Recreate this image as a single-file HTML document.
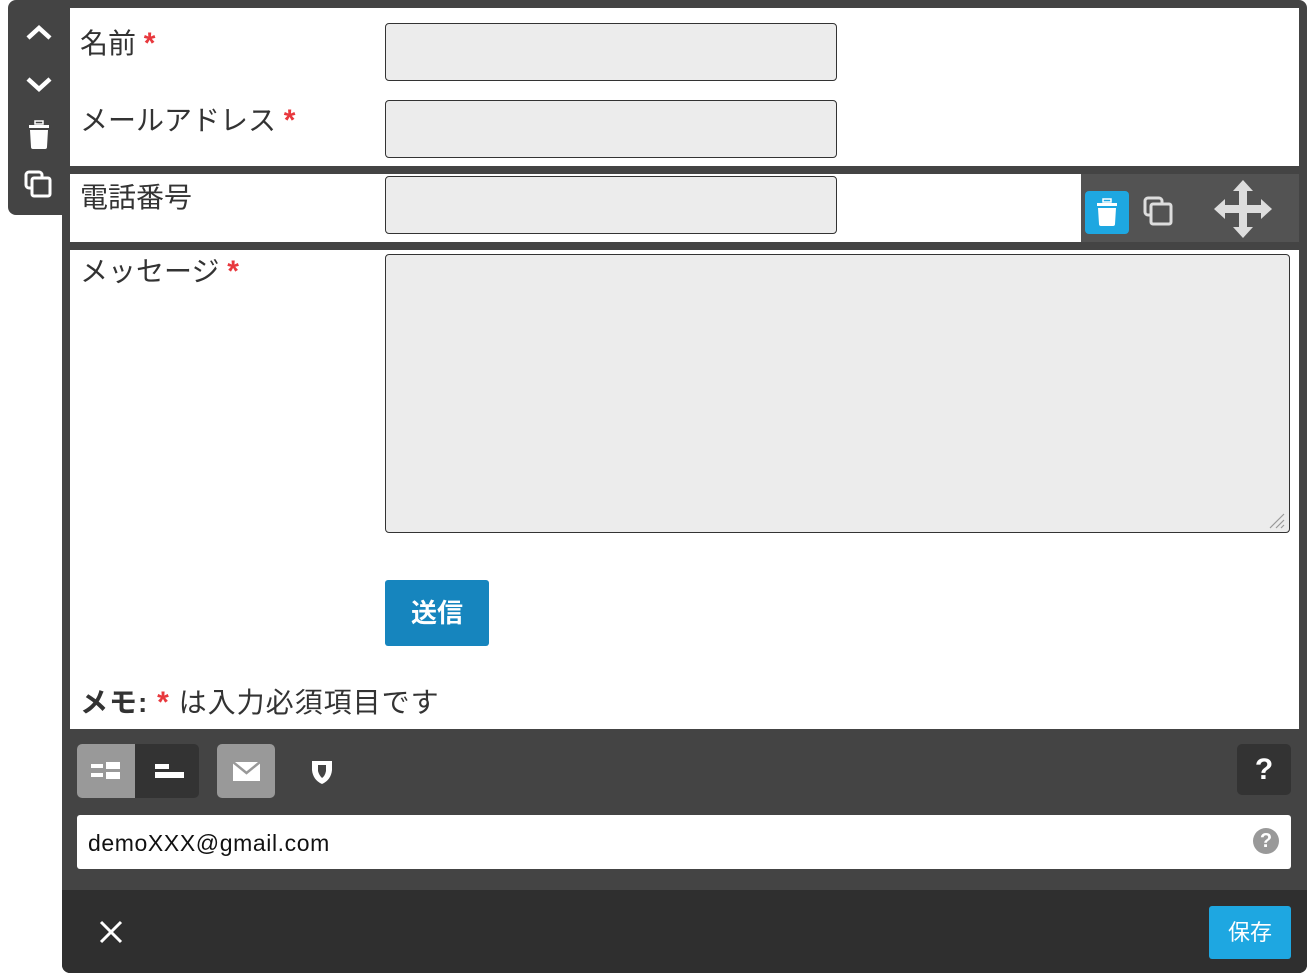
<!DOCTYPE html>
<html><head><meta charset="utf-8">
<style>
*{margin:0;padding:0;box-sizing:border-box}
body{width:1307px;height:975px;background:#fff;position:relative;overflow:hidden;font-family:"Liberation Sans","Noto Sans CJK JP",sans-serif;color:#333}
.a{position:absolute}
.lbl{font-size:28px;color:#333;line-height:36px}
.req{color:#e8383d;font-weight:bold;font-size:30px}
.inp{background:#ececec;border:1px solid #333;border-radius:4px}
</style></head><body>
<div class="a" style="left:62px;top:0;width:1245px;height:973px;background:#444;border-radius:0 8px 8px 8px"></div>
<div class="a" style="left:70px;top:8px;width:1229px;height:158px;background:#fff"></div>
<div class="a" style="left:70px;top:174px;width:1011px;height:68px;background:#fff"></div>
<div class="a" style="left:1081px;top:174px;width:218px;height:68px;background:#535353"></div>
<div class="a" style="left:70px;top:250px;width:1229px;height:479px;background:#fff"></div>
<div class="a" style="left:8px;top:0;width:62px;height:215px;background:#444;border-radius:8px 0 8px 8px"></div>
<svg class="a" style="left:24px;top:22px" width="30" height="180" viewBox="0 0 30 180">
<path d="M4 16 L15 6 L26 16" fill="none" stroke="#fff" stroke-width="4.5"/>
<path d="M4 57 L15 67 L26 57" fill="none" stroke="#fff" stroke-width="4.5"/>
<rect x="5" y="103" width="20" height="3" fill="#fff"/><rect x="11" y="99" width="8" height="3" fill="none" stroke="#fff" stroke-width="1.5"/>
<path d="M6 108 H24 L23 125 Q23 127 21 127 H9 Q7 127 7 125 Z" fill="#fff"/>
<rect x="2" y="150" width="16" height="16" rx="3" fill="none" stroke="#fff" stroke-width="3"/>
<rect x="8" y="156" width="18" height="18" rx="2" fill="#444" stroke="#fff" stroke-width="3"/>
</svg>
<div class="a lbl" style="left:80px;top:26px">名前 <span class="req">*</span></div>
<div class="a lbl" style="left:80px;top:103px">メールアドレス <span class="req">*</span></div>
<div class="a lbl" style="left:80px;top:180px">電話番号</div>
<div class="a lbl" style="left:80px;top:254px">メッセージ <span class="req">*</span></div>
<div class="a inp" style="left:385px;top:23px;width:452px;height:58px"></div>
<div class="a inp" style="left:385px;top:100px;width:452px;height:58px"></div>
<div class="a inp" style="left:385px;top:176px;width:452px;height:58px"></div>
<div class="a inp" style="left:385px;top:254px;width:905px;height:279px"></div>
<svg class="a" style="left:1266px;top:510px" width="20" height="20"><path d="M18 4 L4 18 M18 10 L10 18 M18 15 L15 18" stroke="#999" stroke-width="1.2"/></svg>
<div class="a" style="left:1085px;top:191px;width:44px;height:43px;background:#1ea7e1;border-radius:4px"></div>
<svg class="a" style="left:1085px;top:191px" width="44" height="43"><rect x="12" y="12" width="20" height="3" fill="#fff"/><rect x="18" y="8" width="8" height="3" fill="none" stroke="#fff" stroke-width="1.5"/><path d="M13 17 H31 L30 33 Q30 35 28 35 H16 Q14 35 14 33 Z" fill="#fff"/></svg>
<svg class="a" style="left:1142px;top:195px" width="34" height="34"><rect x="3" y="3" width="17" height="17" rx="3" fill="none" stroke="#ddd" stroke-width="3"/><rect x="9" y="9" width="20" height="20" rx="2" fill="#535353" stroke="#ddd" stroke-width="3"/></svg>
<svg class="a" style="left:1213px;top:179px" width="60" height="60" viewBox="0 0 60 60"><path d="M30 1 L40 12 H34 V26 H48 V20 L59 30 L48 40 V34 H34 V48 H40 L30 59 L20 48 H26 V34 H12 V40 L1 30 L12 20 V26 H26 V12 H20 Z" fill="#ddd"/></svg>
<div class="a" style="left:385px;top:580px;width:104px;height:66px;background:#1685be;border-radius:3px;color:#fff;font-size:26px;font-weight:bold;text-align:center;line-height:66px">送信</div>
<div class="a" style="left:80px;top:685px;font-size:28px;line-height:36px;color:#333;letter-spacing:1px"><b>メモ:</b> <span class="req">*</span> は入力必須項目です</div>
<div class="a" style="left:77px;top:744px;width:122px;height:54px;background:#333;border-radius:5px"></div>
<div class="a" style="left:77px;top:744px;width:58px;height:54px;background:#999;border-radius:5px 0 0 5px"></div>
<svg class="a" style="left:77px;top:744px" width="122" height="54"><rect x="14" y="20" width="12" height="4" fill="#fff"/><rect x="29" y="18" width="14" height="7" fill="#fff"/><rect x="14" y="29" width="12" height="4" fill="#fff"/><rect x="29" y="28" width="14" height="7" fill="#fff"/><rect x="78" y="20" width="14" height="5" fill="#fff"/><rect x="78" y="28" width="29" height="6" fill="#fff"/></svg>
<div class="a" style="left:217px;top:744px;width:58px;height:54px;background:#999;border-radius:5px"></div>
<svg class="a" style="left:217px;top:744px" width="58" height="54"><rect x="16" y="18" width="27" height="19" fill="#fff"/><path d="M16 18 L29.5 29 L43 18" fill="none" stroke="#999" stroke-width="2.5"/></svg>
<svg class="a" style="left:310px;top:758px" width="24" height="28"><path d="M2 3 H22 V12 Q21 22 12 26 Q3 22 2 12 Z" fill="#fff"/><path d="M8 7 H16 V13 Q15 18 12 20 Q9 17 8 13 Z" fill="#444"/></svg>
<div class="a" style="left:1237px;top:744px;width:54px;height:51px;background:#333;border-radius:5px;color:#fff;font-size:30px;font-weight:bold;text-align:center;line-height:51px">?</div>
<div class="a" style="left:77px;top:815px;width:1214px;height:54px;background:#fff;border-radius:3px;font-size:23px;line-height:56px;padding-left:11px;color:#111;letter-spacing:0.6px">demoXXX@gmail.com</div>
<div class="a" style="left:1253px;top:828px;width:26px;height:26px;border-radius:50%;background:#999;color:#fff;font-size:20px;font-weight:bold;text-align:center;line-height:27px">?</div>
<div class="a" style="left:62px;top:890px;width:1245px;height:83px;background:#2f2f2f;border-radius:0 0 8px 8px"></div>
<svg class="a" style="left:98px;top:919px" width="26" height="26"><path d="M3 3 L23 23 M23 3 L3 23" stroke="#fff" stroke-width="3"/></svg>
<div class="a" style="left:1209px;top:906px;width:82px;height:53px;background:#1ea7e1;border-radius:3px;color:#fff;font-size:22px;text-align:center;line-height:53px">保存</div>
</body></html>
